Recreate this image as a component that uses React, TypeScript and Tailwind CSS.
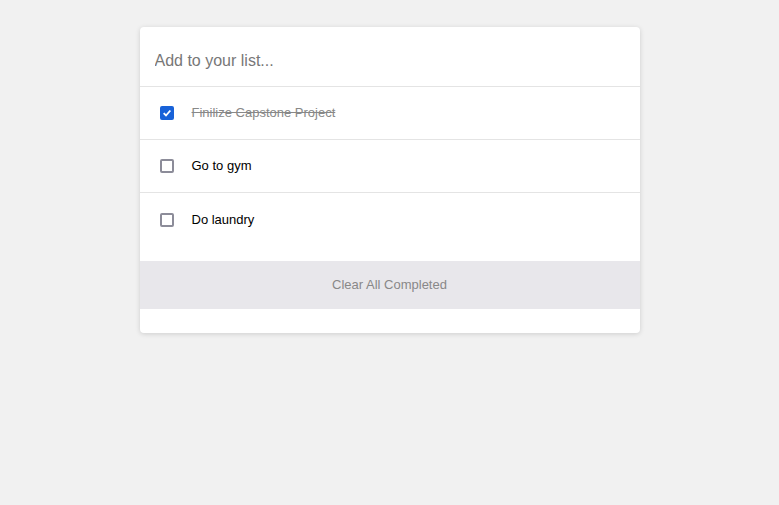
import { useState } from 'react';

type Todo = { id: number; text: string; done: boolean };

const initial: Todo[] = [
  { id: 1, text: 'Finilize Capstone Project', done: true },
  { id: 2, text: 'Go to gym', done: false },
  { id: 3, text: 'Do laundry', done: false },
];

function Box({ checked, onToggle }: { checked: boolean; onToggle: () => void }) {
  return (
    <button
      onClick={onToggle}
      className={`flex h-[14px] w-[14px] shrink-0 items-center justify-center rounded-[2px] border-2 ${
        checked ? 'border-[#1862d8] bg-[#1862d8]' : 'border-[#8c8c99] bg-white'
      }`}
    >
      {checked && (
        <svg viewBox="0 0 12 12" className="h-[10px] w-[10px]">
          <path d="M2 6.2 L4.8 9 L10 3" fill="none" stroke="white" strokeWidth="2.2" />
        </svg>
      )}
    </button>
  );
}

export default function App() {
  const [todos, setTodos] = useState<Todo[]>(initial);
  const [draft, setDraft] = useState('');

  const toggle = (id: number) =>
    setTodos((t) => t.map((x) => (x.id === id ? { ...x, done: !x.done } : x)));

  return (
    <div className="flex min-h-[505px] justify-center bg-[#f1f1f1] pt-[27px] font-['Liberation_Sans',sans-serif]">
      <div className="h-fit w-[500px] rounded-[4px] bg-white pb-6 shadow-[0_1px_5px_rgba(0,0,0,0.15)]">
        {/* input */}
        <div className="flex h-[60px] items-start border-b border-[#e4e4e4] px-[15px] pt-[22px]">
          <input
            value={draft}
            onChange={(e) => setDraft(e.target.value)}
            placeholder="Add to your list..."
            className="h-6 w-full bg-transparent text-[16px] text-[#333] outline-none placeholder:text-[#777]"
          />
        </div>

        {/* list */}
        <ul className="pb-[15px]">
          {todos.map((t, i) => (
            <li
              key={t.id}
              className={`flex h-[53px] items-center gap-[18px] px-5 ${
                i < todos.length - 1 ? 'border-b border-[#e4e4e4]' : ''
              }`}
            >
              <Box checked={t.done} onToggle={() => toggle(t.id)} />
              <span
                className={`text-[13px] ${
                  t.done ? 'text-[#888] line-through' : 'text-black'
                }`}
              >
                {t.text}
              </span>
            </li>
          ))}
        </ul>

        {/* footer */}
        <button
          onClick={() => setTodos((t) => t.filter((x) => !x.done))}
          className="flex h-12 w-full items-center justify-center bg-[#e8e7eb] text-[13px] text-[#888]"
        >
          Clear All Completed
        </button>
      </div>
    </div>
  );
}
